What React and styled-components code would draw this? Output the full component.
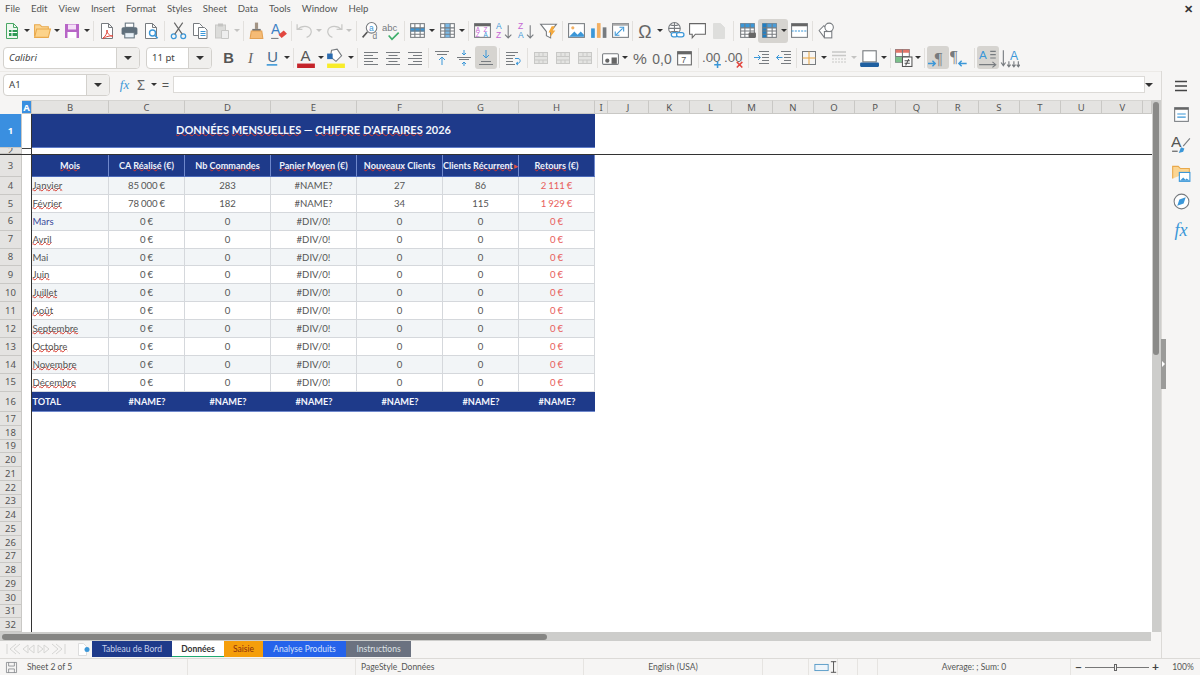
import React from 'react';
import styled, {createGlobalStyle} from 'styled-components';

const GlobalStyle = createGlobalStyle`
    html, body {
        margin: 0;
        padding: 0;
        background: #f6f5f4;
        overflow: hidden;
    }
`;

const UI_FONT = '"Noto Sans", "Open Sans", sans-serif';
const CELL_FONT = 'Lato, "Liberation Sans", sans-serif';
const NAVY = '#1e3a8a';

const Window = styled.div`
    width: 1200px;
    height: 675px;
    display: flex;
    flex-direction: column;
    background: #f6f5f4;
    font-family: ${UI_FONT};
    color: #444;
    overflow: hidden;
`;

const MenuBar = styled.div`
    height: 17px;
    display: flex;
    align-items: center;
    padding-left: 5px;
    gap: 11px;
    font-family: ${CELL_FONT};
    font-size: 9.6px;
    color: #555;
    flex: none;
`;

const CloseMark = styled.span`
    margin-left: auto;
    margin-right: 7px;
    font-size: 11px;
    font-weight: 700;
    color: #333;
`;

const Toolbar = styled.div`
    height: 27px;
    display: flex;
    align-items: center;
    padding-left: ${p => p.$pad || 1}px;
    flex: none;
`;

const ToolButton = styled.div`
    width: 22px;
    height: 23px;
    flex: none;
    display: flex;
    align-items: center;
    justify-content: center;
    border-radius: 3px;
    background: ${p => p.$active ? '#d6d4d0' : 'transparent'};
`;

const SplitActive = styled.div`
    display: flex;
    align-items: center;
    flex: none;
    height: 24px;
    border-radius: 3px;
    background: #d6d4d0;
`;

const CaretBox = styled.div`
    width: 8px;
    flex: none;
    display: flex;
    justify-content: center;
`;

const Caret = styled.i`
    display: block;
    width: 0;
    height: 0;
    border-left: 3px solid transparent;
    border-right: 3px solid transparent;
    border-top: 3px solid ${p => p.$muted ? '#c4c4c2' : '#333'};
`;

const ToolSep = styled.div`
    width: ${p => p.$w}px;
    height: 20px;
    flex: none;
    display: flex;
    justify-content: center;

    &::after {
        content: '';
        width: 1px;
        background: #e2e0dd;
    }
`;

const Combo = styled.div`
    width: ${p => p.$w}px;
    height: 22px;
    margin-right: ${p => p.$mr || 0}px;
    box-sizing: border-box;
    flex: none;
    display: flex;
    border: 1px solid #d3d1cd;
    border-radius: 4px;
    background: #fff;
    overflow: hidden;
`;

const ComboText = styled.div`
    flex: 1;
    padding-left: 5px;
    display: flex;
    align-items: center;
    font-size: 9.6px;
    font-style: ${p => p.$italic ? 'italic' : 'normal'};
    color: #444;
`;

const ComboArrow = styled.div`
    width: 22px;
    display: flex;
    align-items: center;
    justify-content: center;
    background: #f0efed;
    border-left: 1px solid #d3d1cd;
`;

const BigCaret = styled.i`
    display: block;
    width: 0;
    height: 0;
    border-left: 4px solid transparent;
    border-right: 4px solid transparent;
    border-top: 4px solid #333;
`;

const Workspace = styled.div`
    display: flex;
    flex: 1;
    min-height: 0;
`;

const MainColumn = styled.div`
    width: 1161px;
    display: flex;
    flex-direction: column;
    flex: none;
`;

const FormulaBar = styled.div`
    height: 29px;
    flex: none;
    display: flex;
    align-items: center;
    padding: 0 0 3px 3px;
    box-sizing: border-box;
    border-top: 1px solid #eceae7;
`;

const FormulaGlyph = styled.div`
    width: ${p => p.$w}px;
    flex: none;
    text-align: center;
    font-family: ${p => p.$serif ? '"Liberation Serif", serif' : UI_FONT};
    font-style: ${p => p.$serif ? 'italic' : 'normal'};
    font-size: ${p => p.$size}px;
    color: ${p => p.$color};
`;

const FormulaInput = styled.div`
    width: 972px;
    height: 17px;
    flex: none;
    background: #fff;
    border: 1px solid #dcdad7;
    box-sizing: border-box;
`;

const SheetArea = styled.div`
    flex: 1;
    display: flex;
    min-height: 0;
`;

const Grid = styled.div`
    width: 1152px;
    flex: none;
    background: #fff;
    overflow: hidden;
`;

const COLUMNS = '22px 10px 77px 76px 86px 86px 86px 76px 76px 13px repeat(13, 41.2px) 1fr';

const GridRow = styled.div`
    display: grid;
    grid-template-columns: ${COLUMNS};
    height: ${p => p.$h}px;
    box-sizing: border-box;
    border-bottom: ${p => p.$freeze ? '1px solid #333' : 'none'};
`;

const Corner = styled.div`
    background: #f6f5f4;
`;

const ColHead = styled.div`
    background: ${p => p.$on ? '#3a8fe0' : '#e4e3e1'};
    color: ${p => p.$on ? '#fff' : '#555'};
    font-weight: ${p => p.$on ? 700 : 400};
    font-size: 9.5px;
    border-right: 1px solid #c9c8c5;
    border-bottom: 1px solid #c9c8c5;
    border-top: 1px solid #d6d5d2;
    box-sizing: border-box;
    display: flex;
    align-items: center;
    justify-content: center;
    overflow: hidden;
`;

const RowHead = styled.div`
    background: ${p => p.$on ? '#3a8fe0' : '#e4e3e1'};
    color: ${p => p.$on ? '#fff' : '#555'};
    font-weight: ${p => p.$on ? 700 : 400};
    font-size: 9.5px;
    line-height: 1;
    border-right: 1px solid #c9c8c5;
    border-bottom: 1px solid #c9c8c5;
    box-sizing: border-box;
    display: flex;
    align-items: center;
    justify-content: center;
    overflow: hidden;
`;

const CellA = styled.div`
    border-right: 1px solid #333;
    box-sizing: border-box;
    background: #fff;
    position: relative;
`;

const CursorHandle = styled.i`
    position: absolute;
    left: 0;
    right: -1px;
    top: 0;
    height: 1px;
    background: #444;
`;

const TitleCell = styled.div`
    grid-column: span 7;
    background: ${NAVY};
    border-bottom: 1px solid #5f7cc9;
    box-sizing: border-box;
    padding-bottom: 3px;
    color: #f2f5fc;
    font-family: ${CELL_FONT};
    font-weight: 700;
    font-size: 11px;
    display: flex;
    align-items: center;
    justify-content: center;
    white-space: pre;
`;

const Cell = styled.div`
    box-sizing: border-box;
    font-family: ${CELL_FONT};
    font-size: 9.6px;
    word-spacing: -0.6px;
    display: flex;
    align-items: center;
    white-space: pre;
    overflow: hidden;
    justify-content: ${p => p.$left ? 'flex-start' : 'center'};
    padding-left: ${p => p.$left ? 0.5 : 0}px;
    color: ${p => p.$color || '#555'};
    background: ${p => p.$shade ? '#f2f5f7' : '#fff'};
    border-right: 1px solid #d5d8dc;
    border-bottom: 1px solid #d5d8dc;
`;

const HeadCell = styled.div`
    box-sizing: border-box;
    background: ${NAVY};
    color: #eef2fb;
    font-family: ${CELL_FONT};
    font-weight: 700;
    font-size: 9.1px;
    display: flex;
    align-items: center;
    justify-content: center;
    white-space: pre;
    overflow: hidden;
    border-right: 1px solid #6f88cc;
    border-bottom: 1px solid #4c6ab8;
`;

const TotalCell = styled.div`
    box-sizing: border-box;
    background: ${NAVY};
    color: #f2f5fc;
    font-family: ${CELL_FONT};
    font-weight: 700;
    font-size: 9.2px;
    display: flex;
    align-items: center;
    justify-content: ${p => p.$left ? 'flex-start' : 'center'};
    padding-left: ${p => p.$left ? 0.5 : 0}px;
    border-bottom: 1px solid #6f88cc;
`;

const Spell = styled.span`
    text-decoration: underline wavy #d8362a;
    text-decoration-thickness: 0.6px;
    text-underline-offset: -1.5px;
    text-decoration-skip-ink: none;
`;

const CutArrow = styled.span`
    font-size: 5px;
    color: #e2533f;
    margin-left: auto;
`;

const VScroll = styled.div`
    flex: 1;
    background: #cdcdcb;
    padding-top: 2px;
`;

const VThumb = styled.div`
    width: 6px;
    height: 253px;
    margin-left: 1px;
    background: #8a8a88;
    border-radius: 3px;
`;

const HScroll = styled.div`
    height: 9px;
    width: 1151px;
    flex: none;
    background: #cdcdcb;
    padding: 1.5px 0 0 2px;
    box-sizing: border-box;
`;

const HThumb = styled.div`
    width: 545px;
    height: 6px;
    background: #858583;
    border-radius: 3px;
`;

const TabBar = styled.div`
    height: 17px;
    flex: none;
    display: flex;
    align-items: stretch;
    box-sizing: border-box;
    padding-bottom: 1px;
`;

const TabNav = styled.div`
    width: 75px;
    flex: none;
    display: flex;
    align-items: center;
    padding-left: 6px;
    box-sizing: border-box;
`;

const AddTab = styled.div`
    width: 17px;
    flex: none;
    display: flex;
    align-items: center;
    justify-content: center;
`;

const Tab = styled.div`
    width: ${p => p.$w}px;
    flex: none;
    box-sizing: border-box;
    display: flex;
    align-items: center;
    justify-content: center;
    font-family: ${CELL_FONT};
    font-size: 8.5px;
    background: ${p => p.$bg};
    color: ${p => p.$color};
    font-weight: ${p => p.$current ? 700 : 400};
    border-bottom: ${p => p.$current ? '1px solid #1fa971' : 'none'};
`;

const Sidebar = styled.div`
    flex: 1;
    border-left: 1px solid #dcdad7;
    display: flex;
    flex-direction: column;
    align-items: center;
    position: relative;
`;

const SideButton = styled.div`
    height: 29px;
    display: flex;
    align-items: center;
    justify-content: center;
`;

const DockHandle = styled.div`
    position: absolute;
    left: -1px;
    top: 268px;
    width: 5px;
    height: 50px;
    background: #9b9b99;

    &::after {
        content: '';
        position: absolute;
        left: 1px;
        top: 22px;
        border-left: 3px solid #fff;
        border-top: 3px solid transparent;
        border-bottom: 3px solid transparent;
    }
`;

const StatusBar = styled.div`
    height: 16px;
    flex: none;
    display: flex;
    align-items: stretch;
    border-top: 1px solid #dcdad7;
    font-family: ${CELL_FONT};
    font-size: 8.5px;
    color: #555;
`;

const StatusCell = styled.div`
    width: ${p => p.$w}px;
    flex: none;
    box-sizing: border-box;
    display: flex;
    align-items: center;
    gap: ${p => p.$gap || 0}px;
    justify-content: ${p => p.$center ? 'center' : 'flex-start'};
    padding-left: ${p => p.$pad || 0}px;
    border-right: ${p => p.$plain ? 'none' : '1px solid #e6e4e1'};
`;

const Slider = styled.div`
    width: 64px;
    height: 1px;
    background: #777;
    position: relative;
`;

const SliderKnob = styled.i`
    position: absolute;
    left: 29px;
    top: -3px;
    width: 3px;
    height: 7px;
    box-sizing: border-box;
    border: 1px solid #666;
    background: #f6f5f4;
`;

const ZoomSign = styled.span`
    font-size: 12px;
    font-weight: 700;
    line-height: 1;
    color: #444;
`;

// icons, drawn on an 18 unit box
const BLUE = '#3b97d8';
const GREY = '#777b7f';
const LIGHT = '#c8c8c6';
const Svg = ({size = 18, children}) => (
    <svg width={size} height={size} viewBox="0 0 18 18" fill="none" strokeWidth="1">{children}</svg>
);
const GlyphText = ({x, y, size = 9, color = GREY, weight = 400, style = 'normal', family = 'Liberation Sans', anchor = 'start', children}) => (
    <text x={x} y={y} fontSize={size} fill={color} fontWeight={weight} fontStyle={style} fontFamily={family} textAnchor={anchor}>{children}</text>
);
const Sheet = ({fill = '#fff', stroke = GREY}) => (
    <path d="M3.5 1.5h7l4 4v11h-11zM10.5 1.5v4h4" fill={fill} stroke={stroke}/>
);
const TableIcon = ({band}) => (
    <>
        <rect x="2.5" y="2.5" width="13" height="13" fill="#fff" stroke={GREY}/>
        {band}
        <path stroke={GREY} d="M2.5 6.5h13M2.5 9.5h13M2.5 12.5h13M6.5 2.5v13M11.5 2.5v13"/>
    </>
);
const MergeIcon = () => (
    <>
        <rect x="2.5" y="3.5" width="13" height="11" fill="#e4e4e2" stroke={LIGHT}/>
        <path stroke={LIGHT} d="M2.5 7.5h13M2.5 11h13M7 3.5v4M11 3.5v4M7 11v3.5M11 11v3.5"/>
    </>
);

const icons = {
    newDoc: <Svg><Sheet fill="#eef7ef" stroke="#4aa765"/><rect x="6" y="8" width="8" height="6" fill="#2f9a55"/><path stroke="#fff" d="M6 10.5h8M9 8v6"/></Svg>,
    open: <Svg size={19}><path d="M1.5 14.5v-11h5l2 2h6v2" fill="#fbd592" stroke="#e9a94b"/><path d="M1.5 15.5l2-8h13l-2 8z" fill="#fcd38a" stroke="#e9a94b"/></Svg>,
    save: <Svg><path d="M2 2h14v14H2z" fill="#b765c6"/><rect x="5" y="2.5" width="8" height="5" fill="#f4dff7"/><rect x="4.5" y="10" width="9" height="6" fill="#fff"/></Svg>,
    pdf: <Svg><Sheet/><path stroke="#e0453a" d="M5 16c3-2 4-5 4-8 0 3 2 6 6 6-3 0-7 0-10 3"/></Svg>,
    print: <Svg size={19}><rect x="5" y="2" width="8" height="4" fill="#fff" stroke="#66757f"/><rect x="1.5" y="6" width="15" height="7" rx="1.5" fill="#5f6f7b"/><rect x="4.5" y="11" width="9" height="5" fill="#e8f1f8" stroke="#66757f"/></Svg>,
    preview: <Svg><Sheet/><circle cx="10.5" cy="11" r="3" fill="#fff" stroke={BLUE} strokeWidth="1.4"/><path stroke={BLUE} strokeWidth="1.6" d="M12.7 13.2l3 3"/></Svg>,
    cut: <Svg size={19}><circle cx="4.5" cy="14.5" r="2.3" stroke={BLUE} strokeWidth="1.2"/><circle cx="13.5" cy="14.5" r="2.3" stroke={BLUE} strokeWidth="1.2"/><path stroke="#666" strokeWidth="1.1" d="M12.5 12.5L5 1.5M5.5 12.5L13 1.5"/></Svg>,
    copy: <Svg><path d="M2.5 1.5h6l3 3v9h-9z" fill="#fff" stroke={GREY}/><path d="M7.5 5.5h6l2.5 2.5v8.5H7.5z" fill="#fff" stroke={GREY}/><path stroke={BLUE} d="M9.5 9.5h5M9.5 11.5h5M9.5 13.5h5"/></Svg>,
    paste: <Svg><rect x="2.5" y="3" width="10" height="13" fill="#dcdcda" stroke={LIGHT}/><rect x="5" y="1.5" width="5" height="3" fill="#c4c4c2"/><path d="M8.5 8.5h7v8h-7z" fill="#eee" stroke={LIGHT}/></Svg>,
    brush: <Svg size={19}><path d="M7.5 1.5h3v6h-3z" fill="#a39484"/><path d="M5 7.5h8v2H5z" fill="#777"/><path d="M4 9.5h10l1 7H3z" fill="#f5bb75" stroke="#e3a153"/></Svg>,
    clear: <Svg size={19}><GlyphText x={2} y={12} size={13} color="#3b7fc4">A</GlyphText><path d="M9 13l5-4 3 3-5 4z" fill="#e2473f"/><path stroke={GREY} d="M2 16.5h7"/></Svg>,
    undo: <Svg size={19}><path stroke={LIGHT} strokeWidth="1.2" d="M2 3v5h5M2.5 8C6 4 13 4 15 8c1.5 3.5-1 6.5-4 7.5"/></Svg>,
    redo: <Svg size={19}><path stroke={LIGHT} strokeWidth="1.2" d="M16 3v5h-5M15.5 8C12 4 5 4 3 8c-1.5 3.5 1 6.5 4 7.5"/></Svg>,
    find: <Svg size={19}><circle cx="10" cy="6.5" r="5" fill="#fff" stroke={GREY}/><path stroke="#555" strokeWidth="1.5" d="M6 10.5l-4.5 5"/><GlyphText x={7.5} y={9} size={8} color={BLUE}>a</GlyphText><GlyphText x={11} y={17.5} size={8}>d</GlyphText></Svg>,
    spell: <Svg size={20}><GlyphText x={0} y={9} size={8.5}>abc</GlyphText><path stroke="#3dae6a" strokeWidth="1.5" d="M6 13l3 3.5 6-6"/></Svg>,
    rows: <Svg size={19}><TableIcon band={<rect x="2.5" y="6.5" width="13" height="3.5" fill={BLUE}/>}/></Svg>,
    cols: <Svg size={19}><TableIcon band={<rect x="6.5" y="2.5" width="5" height="13" fill="#7cbbe8"/>}/></Svg>,
    sortTable: <Svg size={19}><rect x="1.5" y="2.5" width="15" height="13" fill="#fff" stroke={GREY}/><rect x="1.5" y="2.5" width="15" height="2.5" fill="#666"/><GlyphText x={2.5} y={10} size={6} color="#c565d3">A</GlyphText><GlyphText x={2.5} y={15.5} size={6} color="#c565d3">Z</GlyphText><GlyphText x={10} y={10} size={6} color="#c565d3">Z</GlyphText><GlyphText x={10} y={15.5} size={6} color={BLUE}>A</GlyphText></Svg>,
    sortUp: <Svg size={19}><GlyphText x={1} y={8} size={8} color={BLUE}>A</GlyphText><GlyphText x={1} y={16.5} size={8} color="#c565d3">Z</GlyphText><path stroke={GREY} d="M12.5 4v12M9.5 13l3 3 3-3"/></Svg>,
    sortDown: <Svg size={19}><GlyphText x={1} y={8} size={8} color="#c565d3">Z</GlyphText><GlyphText x={1} y={16.5} size={8} color={BLUE}>A</GlyphText><path stroke={GREY} d="M12.5 4v12M9.5 13l3 3 3-3"/></Svg>,
    filter: <Svg size={19}><path d="M1.5 3h15L11 10v6l-4-2v-4z" fill="#fff" stroke={GREY}/><path d="M12 5l-3 6h2.5l-1 4.5 5-6.5H13l2-4z" fill="#f5a93c"/></Svg>,
    image: <Svg size={19}><rect x="1.5" y="2.5" width="15" height="13" fill="#fff" stroke={GREY}/><circle cx="5.5" cy="6.5" r="1.5" fill="#f3b063"/><path d="M2 15l5-5 3 3 3-3 3 3v2z" fill={BLUE}/></Svg>,
    chart: <Svg size={19}><rect x="2" y="7" width="3.5" height="9" fill={BLUE}/><rect x="7.5" y="2" width="3.5" height="14" fill="#f3b063"/><rect x="13" y="6" width="3.5" height="10" fill={GREY}/></Svg>,
    pivot: <Svg size={19}><rect x="1.5" y="2.5" width="15" height="13" fill="#fff" stroke={GREY}/><rect x="1.5" y="2.5" width="15" height="2" fill="#aaa"/><path stroke={BLUE} d="M5 13l6-6M8 6h4v4M4 10v3.5h4"/></Svg>,
    omega: <Svg size={20}><GlyphText x={9} y={15} size={16} color="#666" anchor="middle">Ω</GlyphText></Svg>,
    link: <Svg size={19}><circle cx="8" cy="7" r="5.5" fill="#fff" stroke={GREY}/><path stroke={GREY} d="M2.5 7h11M8 1.5v11M4 3.5c2 1 6 1 8 0M4 10.5c2-1 6-1 8 0"/><rect x="5" y="11" width="6" height="4" rx="2" fill="#fff" stroke={BLUE} strokeWidth="1.2"/><rect x="10" y="11" width="7" height="4" rx="2" fill="#fff" stroke={BLUE} strokeWidth="1.2"/></Svg>,
    comment: <Svg size={19}><path d="M1.5 2.5h15v10H7L4 16v-3.5H1.5z" fill="#fff" stroke="#666"/></Svg>,
    headerDoc: <Svg><path d="M3.5 1.5h7l4 4v11h-11z" fill="#dededc" stroke="#dededc"/></Svg>,
    printArea: <Svg size={19}><TableIcon band={<rect x="2.5" y="2.5" width="13" height="4" fill={BLUE}/>}/><rect x="10" y="11" width="7" height="5" rx="1" fill="#666"/></Svg>,
    freeze: <Svg size={19}><TableIcon band={<><rect x="2.5" y="2.5" width="13" height="4" fill="#4a9cd8"/><rect x="2.5" y="2.5" width="4" height="13" fill="#1f7fc4"/></>}/></Svg>,
    split: <Svg size={19}><rect x="1.5" y="2.5" width="15" height="13" fill="#fff" stroke={GREY}/><rect x="1.5" y="2.5" width="15" height="2.5" fill="#666"/><path stroke={BLUE} strokeDasharray="2 1" d="M1.5 9.5h15"/></Svg>,
    shapes: <Svg size={19}><path d="M2 9l4.5-4.5L11 9l-4.5 6z" fill="#fff" stroke={GREY}/><circle cx="11.5" cy="6" r="4" fill="#fff" stroke={GREY}/><rect x="7" y="10" width="7" height="6" fill="#fff" stroke={GREY}/></Svg>,
    bold: <Svg size={19}><GlyphText x={9} y={14} size={14} color="#555" weight={700} anchor="middle">B</GlyphText></Svg>,
    italic: <Svg size={19}><GlyphText x={9} y={14} size={14} color="#666" style="italic" family="Liberation Serif" anchor="middle">I</GlyphText></Svg>,
    underline: <Svg size={19}><GlyphText x={4} y={13} size={14} color="#4a6a8a">U</GlyphText><path stroke={BLUE} strokeWidth="1.5" d="M3.5 16h10"/></Svg>,
    fontColor: <Svg size={20}><GlyphText x={4} y={12} size={13.5} color="#555">A</GlyphText><rect x="1" y="14" width="16" height="4" fill="#c5242a"/></Svg>,
    bgColor: <Svg size={20}><path d="M5 2l5-1 4 6-5 5-5-4z" fill="#fff" stroke={GREY}/><path d="M1 5h5v5H1z" fill="#2b6cb0"/><rect x="1" y="14" width="16" height="4" fill="#f8ec2a"/></Svg>,
    alignLeft: <Svg><path stroke={GREY} d="M2 3.5h14M2 6.5h9M2 9.5h14M2 12.5h9M2 15.5h14"/></Svg>,
    alignCenter: <Svg><path stroke={GREY} d="M2 3.5h14M4.5 6.5h9M2 9.5h14M4.5 12.5h9M2 15.5h14"/></Svg>,
    alignRight: <Svg><path stroke={GREY} d="M2 3.5h14M7 6.5h9M2 9.5h14M7 12.5h9M2 15.5h14"/></Svg>,
    vTop: <Svg><path stroke={GREY} d="M2 2.5h14M4 5.5h10"/><path stroke={BLUE} d="M9 16V8M6 11l3-3 3 3"/></Svg>,
    vCenter: <Svg><path stroke={GREY} d="M2 8.5h14M4 10.5h10"/><path stroke={BLUE} d="M9 1v5M7 4l2 2 2-2M9 17v-4M7 15l2-2 2 2"/></Svg>,
    vBottom: <Svg><path stroke={GREY} d="M2 15.5h14M4 12.5h10"/><path stroke={BLUE} d="M9 1v8M6 6l3 3 3-3"/></Svg>,
    wrap: <Svg><path stroke={GREY} d="M2 3.5h12M2 6.5h9M2 9.5h7M2 12.5h7M2 15.5h9"/><path stroke={BLUE} d="M11 9.5h3c3 0 3 5-1 5h-1M14 13l-2 1.5 2 1.5"/></Svg>,
    merge: <Svg><MergeIcon/></Svg>,
    currency: <Svg size={19}><rect x="1.5" y="5.5" width="15" height="10" rx="1" fill="#fff" stroke={GREY}/><circle cx="6" cy="12" r="2" fill="#666"/><rect x="10" y="9" width="5" height="6" fill="#666"/></Svg>,
    percent: <Svg size={20}><GlyphText x={9} y={14.5} size={14} color="#666" anchor="middle">%</GlyphText></Svg>,
    number: <Svg size={20}><GlyphText x={9} y={14.5} size={12.5} color="#666" anchor="middle">0,0</GlyphText></Svg>,
    date: <Svg size={19}><rect x="2.5" y="3.5" width="13" height="12.5" fill="#fff" stroke="#666"/><rect x="2.5" y="3.5" width="13" height="2.5" fill="#666"/><GlyphText x={6} y={14.5} size={8.5} color="#555">7</GlyphText></Svg>,
    addDecimal: <Svg size={20}><GlyphText x={0} y={13} size={12} color="#666">.00</GlyphText><path stroke={BLUE} strokeWidth="1.4" d="M14 12v6M11 15h6"/></Svg>,
    delDecimal: <Svg size={20}><GlyphText x={0} y={13} size={12} color="#666">.00</GlyphText><path stroke="#e2473f" strokeWidth="1.4" d="M11.5 12.5l5 5M16.5 12.5l-5 5"/></Svg>,
    indent: <Svg><path stroke={GREY} d="M6 2.5h10M9 5.5h7M9 8.5h7M9 11.5h7M6 14.5h10"/><path stroke={BLUE} d="M1 8.5h6M5 6l2.5 2.5L5 11"/></Svg>,
    outdent: <Svg><path stroke={GREY} d="M6 2.5h10M9 5.5h7M9 8.5h7M9 11.5h7M6 14.5h10"/><path stroke={BLUE} d="M1.5 8.5h6M4 6L1.5 8.5 4 11"/></Svg>,
    borders: <Svg><rect x="2.5" y="2.5" width="13" height="13" stroke={GREY}/><path stroke="#e8a33d" d="M9 2.5v13M2.5 9h13"/></Svg>,
    borderStyle: <Svg><path stroke={LIGHT} strokeWidth="1.5" d="M2 3h14M2 6.5h14"/><path stroke={LIGHT} strokeDasharray="2 1" d="M2 10h14M2 13h14"/></Svg>,
    borderColor: <Svg size={20}><rect x="3.5" y="2.5" width="12" height="10" fill="#fff" stroke={GREY}/><rect x="1" y="13" width="17" height="4" rx="1" fill="#1f5fa0"/></Svg>,
    conditional: <Svg size={19}><rect x="1.5" y="1.5" width="13" height="12" fill="#fff" stroke={GREY}/><rect x="1.5" y="1.5" width="13" height="3" fill="#e2766a"/><rect x="1.5" y="8" width="6" height="5.5" fill="#7bc08a"/><path stroke={GREY} d="M1.5 8h13M8 1.5v12"/><rect x="8" y="8.5" width="9" height="9" fill="#fff" stroke="#555"/><path stroke="#555" d="M10 12h5M10 14.5h5M14 10.5l-3 6"/></Svg>,
    ltr: <Svg size={20}><GlyphText x={6} y={14} size={15} color={GREY} family="Liberation Serif">¶</GlyphText><path stroke={BLUE} strokeWidth="1.3" d="M0 14h6M4 11.5L6.5 14 4 16.5"/></Svg>,
    rtl: <Svg size={20}><GlyphText x={0} y={13} size={15} color={GREY} family="Liberation Serif">¶</GlyphText><path stroke={BLUE} strokeWidth="1.3" d="M8 14h7M10.5 11.5L8 14l2.5 2.5"/></Svg>,
    horizontal: <Svg size={20}><GlyphText x={1} y={10} size={10.5} color={BLUE}>A</GlyphText><path stroke={GREY} d="M11 3h5M11 6h5M11 9h5M1 15h15M13 12.5l3 2.5-3 2.5"/></Svg>,
    vertical: <Svg size={20}><GlyphText x={9} y={11} size={11} color={BLUE}>A</GlyphText><path stroke={GREY} d="M3 2v14M1 13l2 3 2-3M8 12v5M6.5 15l1.5 2 1.5-2M12.5 12v5M11 15l1.5 2 1.5-2M16.5 12v5M15 15l1.5 2 1.5-2"/></Svg>,
    menu: <Svg><path stroke="#444" strokeWidth="1.5" d="M3 4.5h12M3 9h12M3 13.5h12"/></Svg>,
    props: <Svg size={19}><rect x="2.5" y="2.5" width="13" height="13" fill="#fff" stroke={GREY}/><rect x="2.5" y="2.5" width="13" height="2" fill="#666"/><path stroke={BLUE} d="M5 8.5h8M5 11.5h8"/></Svg>,
    styles: <Svg size={20}><GlyphText x={0} y={12} size={14} color="#555">A</GlyphText><path stroke={GREY} d="M17 4l-6 7"/><path d="M9 12l3 1-1 3-4 1z" fill={BLUE}/><path stroke="#555" d="M1 15.5h5"/></Svg>,
    gallery: <Svg size={20}><path d="M1.5 14V3h5l2 2h8v3" fill="#fbd592" stroke="#e9a94b"/><rect x="7.5" y="8.5" width="9.5" height="8" fill="#fff" stroke={BLUE}/><path d="M8 16l3-3 2 2 1-1 3 2z" fill={BLUE}/></Svg>,
    navigator: <Svg size={19}><circle cx="9" cy="9" r="7" fill="#fff" stroke={GREY}/><path d="M13 5l-2 6-6 2 2-6z" fill={BLUE}/></Svg>,
    saveState: <Svg size={13}><path d="M2 2h14v14H2z" stroke={GREY}/><path stroke={GREY} d="M5 2v5h8V2M5 16v-5h8v5"/></Svg>,
    addTab: <svg width="14" height="15" viewBox="0 0 14 15" fill="none"><path d="M1.5 1.5h5l3 3v9h-8z" fill="#fff" stroke="#ddd"/><circle cx="10" cy="7.5" r="2.5" fill={BLUE}/></svg>,
    selRect: <svg width="18" height="11" viewBox="0 0 18 11" fill="none"><rect x="1" y="2" width="15" height="7" fill="#eef5fb" stroke="#4f95c4"/></svg>,
    ibeam: <svg width="8" height="14" viewBox="0 0 8 14" fill="none"><path stroke="#444" d="M1 1h6M4 1v12M1 13h6"/></svg>,
    tabNav: <svg width="60" height="12" viewBox="0 0 60 12" fill="none"><path stroke="#d6d6d4" d="M1 1v10M10 1L4 6l6 5M14 1L8 6l6 5M22 2l-5 4 5 4v-8zM28 2l-5 4 5 4zM32 2l5 4-5 4zM38 2l5 4-5 4zM46 1l6 5-6 5M50 1l6 5-6 5M59 1v10"/></svg>
};

// a name is a button (* = pressed), d / dm a dropdown caret, a number a separator of that width
const TOP_ITEMS = [
    'newDoc', 'd', 'open', 'd', 'save', 'd', 5, 'pdf', 'print', 'preview', 5, 'cut', 'copy', 'paste', 'dm', 4,
    'brush', 'clear', 4, 'undo', 'dm', 'redo', 'dm', 6, 'find', 'spell', 3, 'rows', 'd', 'cols', 'd', 5,
    'sortTable', 'sortUp', 'sortDown', 'filter', 6, 'image', 'chart', 'pivot', 3, 'omega', 'd', 'link', 'comment',
    'headerDoc', 6, 'printArea', 'FREEZE', 'split', 5, 'shapes'
];

const FORMAT_ITEMS = [
    'bold', 'italic', 'underline', 'd', 4, 'fontColor', 'd', 'bgColor', 'd', 5,
    'alignLeft', 'alignCenter', 'alignRight', 5, 'vTop', 'vCenter', '*vBottom', 5, 'wrap', 6, 'merge', 'merge', 'merge', 3,
    'currency', 'd', 'percent', 'number', 'date', 6, 'addDecimal', 'delDecimal', 6, 'indent', 'outdent', 3,
    'borders', 'd', 'borderStyle', 'dm', 'borderColor', 'd', 4, 'conditional', 'd', 5, '*ltr', 'rtl', 6, '*horizontal', 'vertical'
];

const renderItem = (item, i) => {
    if (typeof item === 'number') return <ToolSep key={i} $w={item}/>;
    if (item === 'd') return <CaretBox key={i}><Caret/></CaretBox>;
    if (item === 'dm') return <CaretBox key={i}><Caret $muted/></CaretBox>;
    if (item === 'FREEZE') {
        return (
            <SplitActive key={i}>
                <ToolButton>{icons.freeze}</ToolButton>
                <CaretBox><Caret/></CaretBox>
            </SplitActive>
        );
    }
    const active = item[0] === '*';
    return <ToolButton key={i} $active={active}>{icons[active ? item.slice(1) : item]}</ToolButton>;
};

const MENU = ['File', 'Edit', 'View', 'Insert', 'Format', 'Styles', 'Sheet', 'Data', 'Tools', 'Window', 'Help'];
const COLS = ['B', 'C', 'D', 'E', 'F', 'G', 'H', 'I', 'J', 'K', 'L', 'M', 'N', 'O', 'P', 'Q', 'R', 'S', 'T', 'U', 'V'];
const MONTHS = [
    ['Janvier', 1], ['Février', 1], ['Mars', 0], ['Avril', 1], ['Mai', 0], ['Juin', 1], ['Juillet', 1],
    ['Août', 1], ['Septembre', 1], ['Octobre', 1], ['Novembre', 1], ['Décembre', 1]
];
const TABS = [
    {name: 'Tableau de Bord', w: 80, bg: NAVY, color: '#c5d0ea'},
    {name: 'Données', w: 52, bg: '#fff', color: '#333', current: true},
    {name: 'Saisie', w: 39, bg: '#f59e0b', color: '#8a2f0b'},
    {name: 'Analyse Produits', w: 83, bg: '#2563eb', color: '#d5e2fb'},
    {name: 'Instructions', w: 65, bg: '#6b7280', color: '#dfe2e6'}
];

const rowValues = (i) => {
    if (i === 0) return ['85 000 €', '283', '#NAME?', '27', '86', '2 111 €'];
    if (i === 1) return ['78 000 €', '182', '#NAME?', '34', '115', '1 929 €'];
    return ['0 €', '0', '#DIV/0!', '0', '0', '0 €'];
};

function MonthRow({month, spelled, index}) {
    const shade = index % 2 === 0;
    const values = rowValues(index);
    return (
        <GridRow $h={17.9}>
            <RowHead>{index + 4}</RowHead>
            <CellA/>
            <Cell $left $shade={shade} $color={month === 'Mars' ? '#3a4a9a' : '#555'}>
                {spelled ? <Spell>{month}</Spell> : month}
            </Cell>
            {values.map((v, i) => (
                <Cell key={i} $shade={shade} $color={i === 5 ? '#e8605c' : '#555'}>{v}</Cell>
            ))}
        </GridRow>
    );
}

export default function App() {
    return (
        <Window>
            <GlobalStyle/>
            <MenuBar>
                {MENU.map(m => <span key={m}>{m}</span>)}
                <CloseMark>✕</CloseMark>
            </MenuBar>

            <Toolbar>{TOP_ITEMS.map(renderItem)}</Toolbar>

            <Toolbar $pad={3}>
                <Combo $w={137} $mr={6}>
                    <ComboText $italic>Calibri</ComboText>
                    <ComboArrow><BigCaret/></ComboArrow>
                </Combo>
                <Combo $w={66} $mr={5}>
                    <ComboText>11 pt</ComboText>
                    <ComboArrow><BigCaret/></ComboArrow>
                </Combo>
                {FORMAT_ITEMS.map(renderItem)}
            </Toolbar>

            <Workspace>
                <MainColumn>
                    <FormulaBar>
                        <Combo $w={107} $mr={7}>
                            <ComboText>A1</ComboText>
                            <ComboArrow><BigCaret/></ComboArrow>
                        </Combo>
                        <FormulaGlyph $w={15} $size={13} $color={BLUE} $serif>fx</FormulaGlyph>
                        <FormulaGlyph $w={18} $size={14} $color="#666">Σ</FormulaGlyph>
                        <CaretBox><Caret/></CaretBox>
                        <FormulaGlyph $w={15} $size={13} $color="#555">=</FormulaGlyph>
                        <FormulaInput/>
                        <CaretBox><BigCaret/></CaretBox>
                    </FormulaBar>

                    <SheetArea>
                        <Grid>
                            <GridRow $h={14}>
                                <Corner/>
                                <ColHead $on>A</ColHead>
                                {COLS.map(c => <ColHead key={c}>{c}</ColHead>)}
                                <ColHead/>
                            </GridRow>
                            <GridRow $h={34}>
                                <RowHead $on>1</RowHead>
                                <CellA/>
                                <TitleCell>
                                    <span><Spell>DONNÉES</Spell> <Spell>MENSUELLES</Spell> — <Spell>CHIFFRE</Spell> <Spell>D'AFFAIRES</Spell> 2026</span>
                                </TitleCell>
                            </GridRow>
                            <GridRow $h={7} $freeze>
                                <RowHead>2</RowHead>
                                <CellA><CursorHandle/></CellA>
                            </GridRow>
                            <GridRow $h={22}>
                                <RowHead>3</RowHead>
                                <CellA/>
                                <HeadCell><Spell>Mois</Spell></HeadCell>
                                <HeadCell><span>CA <Spell>Réalisé</Spell> (€)</span></HeadCell>
                                <HeadCell><span>Nb <Spell>Commandes</Spell></span></HeadCell>
                                <HeadCell><span><Spell>Panier</Spell> <Spell>Moyen</Spell> (€)</span></HeadCell>
                                <HeadCell><span><Spell>Nouveaux</Spell> Clients</span></HeadCell>
                                <HeadCell><span>Clients <Spell>Récurrent</Spell></span><CutArrow>▶</CutArrow></HeadCell>
                                <HeadCell><span><Spell>Retours</Spell> (€)</span></HeadCell>
                            </GridRow>
                            {MONTHS.map(([m, spelled], i) => (
                                <MonthRow key={m} month={m} spelled={spelled} index={i}/>
                            ))}
                            <GridRow $h={20.5}>
                                <RowHead>16</RowHead>
                                <CellA/>
                                <TotalCell $left>TOTAL</TotalCell>
                                {[0, 1, 2, 3, 4, 5].map(i => <TotalCell key={i}>#NAME?</TotalCell>)}
                            </GridRow>
                            {Array.from({length: 16}, (_, i) => (
                                <GridRow key={i} $h={13.75}>
                                    <RowHead>{i + 17}</RowHead>
                                    <CellA/>
                                </GridRow>
                            ))}
                        </Grid>
                        <VScroll><VThumb/></VScroll>
                    </SheetArea>

                    <HScroll><HThumb/></HScroll>

                    <TabBar>
                        <TabNav>{icons.tabNav}</TabNav>
                        <AddTab>{icons.addTab}</AddTab>
                        {TABS.map(t => (
                            <Tab key={t.name} $w={t.w} $bg={t.bg} $color={t.color} $current={t.current}>{t.name}</Tab>
                        ))}
                    </TabBar>
                </MainColumn>

                <Sidebar>
                    <DockHandle/>
                    <SideButton>{icons.menu}</SideButton>
                    <SideButton>{icons.props}</SideButton>
                    <SideButton>{icons.styles}</SideButton>
                    <SideButton>{icons.gallery}</SideButton>
                    <SideButton>{icons.navigator}</SideButton>
                    <SideButton><FormulaGlyph $w={30} $size={18} $color={BLUE} $serif>fx</FormulaGlyph></SideButton>
                </Sidebar>
            </Workspace>

            <StatusBar>
                <StatusCell $w={188} $pad={5} $gap={9}>{icons.saveState}<span>Sheet 2 of 5</span></StatusCell>
                <StatusCell $w={168}/>
                <StatusCell $w={228} $pad={5}>PageStyle_Données</StatusCell>
                <StatusCell $w={179} $center>English (USA)</StatusCell>
                <StatusCell $w={46}/>
                <StatusCell $w={29} $pad={5}>{icons.selRect}{icons.ibeam}</StatusCell>
                <StatusCell $w={20}/>
                <StatusCell $w={20}/>
                <StatusCell $w={193} $center>Average: ; Sum: 0</StatusCell>
                <StatusCell $w={95} $plain $pad={4} $gap={3}><ZoomSign>−</ZoomSign><Slider><SliderKnob/></Slider><ZoomSign>+</ZoomSign></StatusCell>
                <StatusCell $w={34} $plain $center>100%</StatusCell>
            </StatusBar>
        </Window>
    );
}
